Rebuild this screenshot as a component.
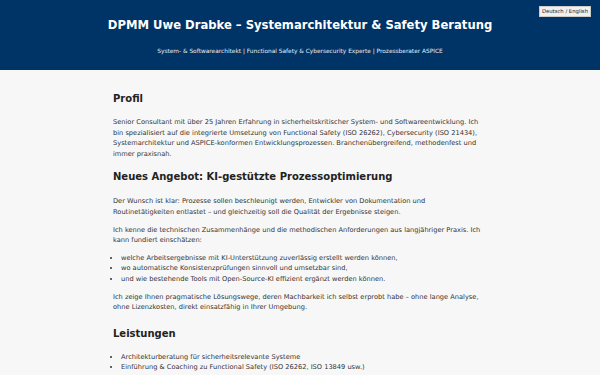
export default function App() {
  return (
    <div
      className="min-h-screen bg-[#f7f7f7] text-[#333]"
      style={{ fontFamily: '"DejaVu Sans", sans-serif' }}
    >
      {/* Header */}
      <header className="relative bg-[#003366] text-white text-center pt-[16px] pb-[14px]">
        <button className="absolute top-[6px] right-[9px] bg-[#f0f0f0] text-[#222] text-[5.3px] leading-none px-[2px] py-[2px] border border-[#ccc]">
          Deutsch / English
        </button>
        <h1 className="text-[11.6px] font-bold leading-[18px]">
          DPMM Uwe Drabke – Systemarchitektur &amp; Safety Beratung
        </h1>
        <p className="text-[5.85px] leading-[10px] mt-[12px] text-[#e8eef5]">
          System- &amp; Softwarearchitekt | Functional Safety &amp; Cybersecurity Experte | Prozessberater ASPICE
        </p>
      </header>

      <main className="w-[374px] mx-auto pt-[21px] text-[6.65px] leading-[10.6px] whitespace-nowrap">
        {/* Profil */}
        <section>
          <h2 className="text-[10px] font-bold leading-[16px] mb-[10px] text-[#222]">Profil</h2>
          <p>
            Senior Consultant mit über 25 Jahren Erfahrung in sicherheitskritischer System- und Softwareentwicklung. Ich
            <br />
            bin spezialisiert auf die integrierte Umsetzung von Functional Safety (ISO 26262), Cybersecurity (ISO 21434),
            <br />
            Systemarchitektur und ASPICE-konformen Entwicklungsprozessen. Branchenübergreifend, methodenfest und
            <br />
            immer praxisnah.
          </p>
        </section>

        {/* Neues Angebot */}
        <section className="mt-[10px]">
          <h2 className="text-[10px] font-bold leading-[16px] mb-[11px] text-[#222]">
            Neues Angebot: KI-gestützte Prozessoptimierung
          </h2>
          <p>
            Der Wunsch ist klar: Prozesse sollen beschleunigt werden, Entwickler von Dokumentation und
            <br />
            Routinetätigkeiten entlastet – und gleichzeitig soll die Qualität der Ergebnisse steigen.
          </p>
          <p className="mt-[7px]">
            Ich kenne die technischen Zusammenhänge und die methodischen Anforderungen aus langjähriger Praxis. Ich
            <br />
            kann fundiert einschätzen:
          </p>
          <ul className="mt-[7px] list-disc pl-[8px]">
            <li>welche Arbeitsergebnisse mit KI-Unterstützung zuverlässig erstellt werden können,</li>
            <li>wo automatische Konsistenzprüfungen sinnvoll und umsetzbar sind,</li>
            <li>und wie bestehende Tools mit Open-Source-KI effizient ergänzt werden können.</li>
          </ul>
          <p className="mt-[7px]">
            Ich zeige Ihnen pragmatische Lösungswege, deren Machbarkeit ich selbst erprobt habe – ohne lange Analyse,
            <br />
            ohne Lizenzkosten, direkt einsatzfähig in Ihrer Umgebung.
          </p>
        </section>

        {/* Leistungen */}
        <section className="mt-[13px]">
          <h2 className="text-[10px] font-bold leading-[16px] mb-[10px] text-[#222]">Leistungen</h2>
          <ul className="list-disc pl-[8px]">
            <li>Architekturberatung für sicherheitsrelevante Systeme</li>
            <li>Einführung &amp; Coaching zu Functional Safety (ISO 26262, ISO 13849 usw.)</li>
            <li>Cybersecurity-Konzepte und Prozessberatung (ISO 21434)</li>
            <li>ASPICE-konforme Prozessgestaltung und Assessment-Vorbereitung</li>
          </ul>
        </section>
      </main>
    </div>
  );
}
